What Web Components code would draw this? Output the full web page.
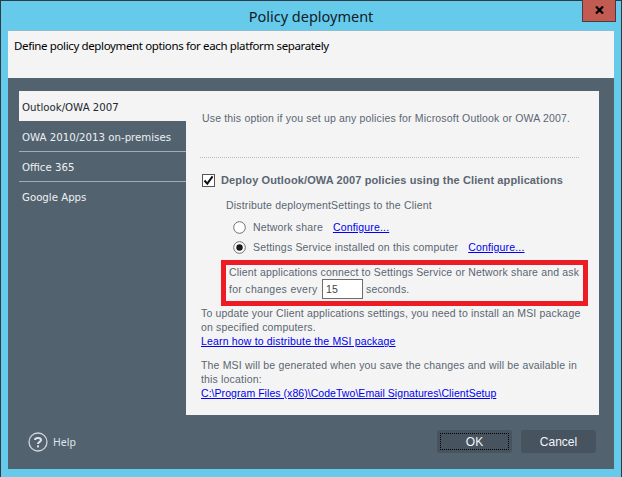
<!DOCTYPE html>
<html>
<head>
<meta charset="utf-8">
<style>
  html, body { margin: 0; padding: 0; background: #66cbeb; }
  body { width: 622px; height: 477px; overflow: hidden; font-family: "Liberation Sans", Arial, sans-serif; }
</style>
</head>
<body>
<policy-dialog heading="Policy deployment">
  <span slot="intro">Define policy deployment options for each platform separately</span>
  <nav-tab slot="nav" active>Outlook/OWA 2007</nav-tab>
  <nav-tab slot="nav" tall>OWA 2010/2013 on-premises</nav-tab>
  <nav-tab slot="nav">Office 365</nav-tab>
  <nav-tab slot="nav" plain>Google Apps</nav-tab>
  <outlook-panel slot="panel"></outlook-panel>
</policy-dialog>

<script>
class PolicyDialog extends HTMLElement {
  connectedCallback() {
    this.attachShadow({ mode: "open" });
    this.shadowRoot.innerHTML = `
      <style>
        :host {
          display: flex;
          flex-direction: column;
          box-sizing: border-box;
          width: 622px;
          height: 477px;
          border: 1px solid #2f3a42;
          border-bottom: 0;
          background: #66cbeb;
          position: relative;
        }
        .title {
          height: 29px;
          display: flex;
          align-items: center;
          justify-content: center;
          font: 14.5px "Noto Sans", sans-serif;
          color: #10202a;
          border-bottom: 1px solid #8fbcd4;
          margin: 0 7px;
        }
        .close {
          position: absolute;
          top: -1px;
          right: 5px;
          width: 34px;
          height: 22px;
          box-sizing: border-box;
          background: #c25b52;
          border: 1px solid #4d3a3c;
          border-top: 0;
        }
        .close svg { display: block; margin: 6px auto 0; }
        .intro {
          margin: 0 7px;
          height: 47px;
          box-sizing: border-box;
          background: #f4f4f4;
          padding: 7px 6px 0;
          font: 11.5px "Noto Sans", sans-serif;
          letter-spacing: -0.37px;
          color: #000;
        }
        .body {
          flex: 1;
          margin: 0 7px 8px;
          background: #52626f;
          display: flex;
          flex-direction: column;
          padding: 13px 15px 0 11px;
        }
        .main { display: flex; height: 324px; }
        .nav { width: 167px; flex: none; }
        .panel { width: 413px; flex: none; background: #f4f4f4; }
        .foot {
          display: flex;
          align-items: center;
          justify-content: flex-end;
          gap: 9px;
          margin-top: 15px;
          height: 23px;
          padding-right: 3px;
        }
        .help {
          margin-right: auto;
          margin-left: 9px;
          display: flex;
          align-items: center;
          gap: 5px;
          color: #dfe6ea;
          font: 10.5px "Noto Sans", sans-serif;
        }
        .help svg { display: block; }
        .btn {
          box-sizing: border-box;
          width: 75px;
          height: 23px;
          border-radius: 3px;
          background: #47535f;
          color: #f2f5f7;
          display: flex;
          align-items: center;
          justify-content: center;
          font: 12px "Liberation Sans", sans-serif;
          position: relative;
        }
        .btn.focus::after {
          content: "";
          position: absolute;
          inset: 3px;
          border: 1px dotted #000;
        }
      </style>
      <div class="title">${this.getAttribute("heading")}</div>
      <div class="close">
        <svg width="9" height="8" viewBox="0 0 9 8"><path d="M1 0.5 L8 7.5 M8 0.5 L1 7.5" stroke="#000" stroke-width="2.2"/></svg>
      </div>
      <div class="intro"><slot name="intro"></slot></div>
      <div class="body">
        <div class="main">
          <div class="nav"><slot name="nav"></slot></div>
          <div class="panel"><slot name="panel"></slot></div>
        </div>
        <div class="foot">
          <div class="help">
            <svg width="20" height="20" viewBox="0 0 20 20">
              <circle cx="10" cy="10" r="9" fill="none" stroke="#cfd6db" stroke-width="1.3"/>
              <path d="M7 8 C7 5.2 13 5.2 13 8 C13 10 10 9.8 10 12" fill="none" stroke="#dfe6ea" stroke-width="2"/>
              <rect x="9" y="13.4" width="2" height="2" fill="#dfe6ea"/>
            </svg>
            <span>Help</span>
          </div>
          <div class="btn focus">OK</div>
          <div class="btn">Cancel</div>
        </div>
      </div>
    `;
  }
}

class NavTab extends HTMLElement {
  connectedCallback() {
    this.attachShadow({ mode: "open" });
    this.shadowRoot.innerHTML = `
      <style>
        :host {
          display: flex;
          align-items: center;
          box-sizing: border-box;
          height: 30px;
          padding: 1px 3px 0 3px;
          font: 10.2px "DejaVu Sans", sans-serif;
          color: #eef1f3;
          border-bottom: 1px solid #a3acb3;
        }
        :host([active]) {
          background: #f4f4f4;
          color: #22282e;
          border-bottom: 0;
          padding-top: 2px;
        }
        :host([tall]) { height: 31px; padding-top: 2px; }
        :host([plain]) { border-bottom: 0; }
      </style>
      <slot></slot>
    `;
  }
}

class RadioRow extends HTMLElement {
  connectedCallback() {
    this.attachShadow({ mode: "open" });
    const on = this.hasAttribute("checked");
    this.shadowRoot.innerHTML = `
      <style>
        :host { display: flex; align-items: center; height: 20px; margin-left: 33px; }
        svg { display: block; flex: none; margin-right: 7px; }
      </style>
      <svg width="13" height="13" viewBox="0 0 13 13">
        <circle cx="6.5" cy="6.5" r="5.8" fill="#fff" stroke="#6d6d6d"/>
        ${on ? '<circle cx="6.5" cy="6.5" r="3.2" fill="#1a1a1a"/>' : ""}
      </svg>
      <slot></slot>
    `;
  }
}

class OutlookPanel extends HTMLElement {
  connectedCallback() {
    this.attachShadow({ mode: "open" });
    this.shadowRoot.innerHTML = `
      <style>
        :host {
          display: block;
          box-sizing: border-box;
          height: 324px;
          padding: 20px 13px 0 14px;
          font: 10.5px/14px "Liberation Sans", sans-serif;
          letter-spacing: 0.17px;
          color: #5a6672;
        }
        a { color: #0000ee; }
        .intro { margin: 0 0 0 2px; height: 14px; }
        .rule { border-top: 1px dotted #b9b9b9; margin: 32px 7px 0 0; }
        .deploy {
          display: flex;
          align-items: center;
          gap: 6px;
          margin: 14px 0 0 2px;
          height: 16px;
          font-weight: bold;
          font-size: 11px;
          letter-spacing: 0.12px;
        }
        .box {
          box-sizing: border-box;
          width: 13px;
          height: 13px;
          border: 1px solid #555;
          background: #fff;
          flex: none;
        }
        .box svg { display: block; }
        .dist { margin: 10px 0 5px 26px; height: 14px; }
        .gap { margin-left: 10px; }
        .gap2 { margin-left: 10px; }
        .note {
          box-sizing: border-box;
          margin: 3px 0 0 21px;
          width: 367px;
          height: 46px;
          border: 5px solid #ed1c24;
          padding: 0 3px;
        }
        .line1 { height: 14px; line-height: 14px; }
        .line2 { height: 20px; display: flex; align-items: center; }
        .ask { width: 93px; flex: none; letter-spacing: 0.3px; }
        .num {
          box-sizing: border-box;
          width: 41px;
          height: 20px;
          border: 1px solid #6d6d6d;
          background: #fff;
          margin-right: 3px;
          padding-left: 3px;
          line-height: 18px;
          color: #444;
        }
        .after { margin: 0 0 0 1px; }
        .after p { margin: 0; }
        .msi { margin-top: 10px !important; }
        .path { letter-spacing: 0.05px; }
      </style>
      <p class="intro">Use this option if you set up any policies for Microsoft Outlook or OWA 2007.</p>
      <div class="rule"></div>
      <div class="deploy">
        <div class="box"><svg width="11" height="11" viewBox="0 0 11 11"><path d="M1.5 5.5 L4.3 8.6 L9.6 1.4" fill="none" stroke="#111" stroke-width="2"/></svg></div>
        <span>Deploy Outlook/OWA 2007 policies using the Client applications</span>
      </div>
      <p class="dist">Distribute deploymentSettings to the Client</p>
      <radio-row><span>Network share</span><a class="gap" href="#">Configure...</a></radio-row>
      <radio-row checked><span>Settings Service installed on this computer</span><a class="gap2" href="#">Configure...</a></radio-row>
      <div class="note">
        <div class="line1">Client applications connect to Settings Service or Network share and ask</div>
        <div class="line2"><span class="ask">for changes every</span><span class="num">15</span><span>seconds.</span></div>
      </div>
      <div class="after">
        <p>To update your Client applications settings, you need to install an MSI package<br>on specified computers.<br><a href="#">Learn how to distribute the MSI package</a></p>
        <p class="msi">The MSI will be generated when you save the changes and will be available in<br>this location:<br><a class="path" href="#">C:\\Program Files (x86)\\CodeTwo\\Email Signatures\\ClientSetup</a></p>
      </div>
    `;
  }
}

customElements.define("policy-dialog", PolicyDialog);
customElements.define("nav-tab", NavTab);
customElements.define("radio-row", RadioRow);
customElements.define("outlook-panel", OutlookPanel);
</script>
</body>
</html>
